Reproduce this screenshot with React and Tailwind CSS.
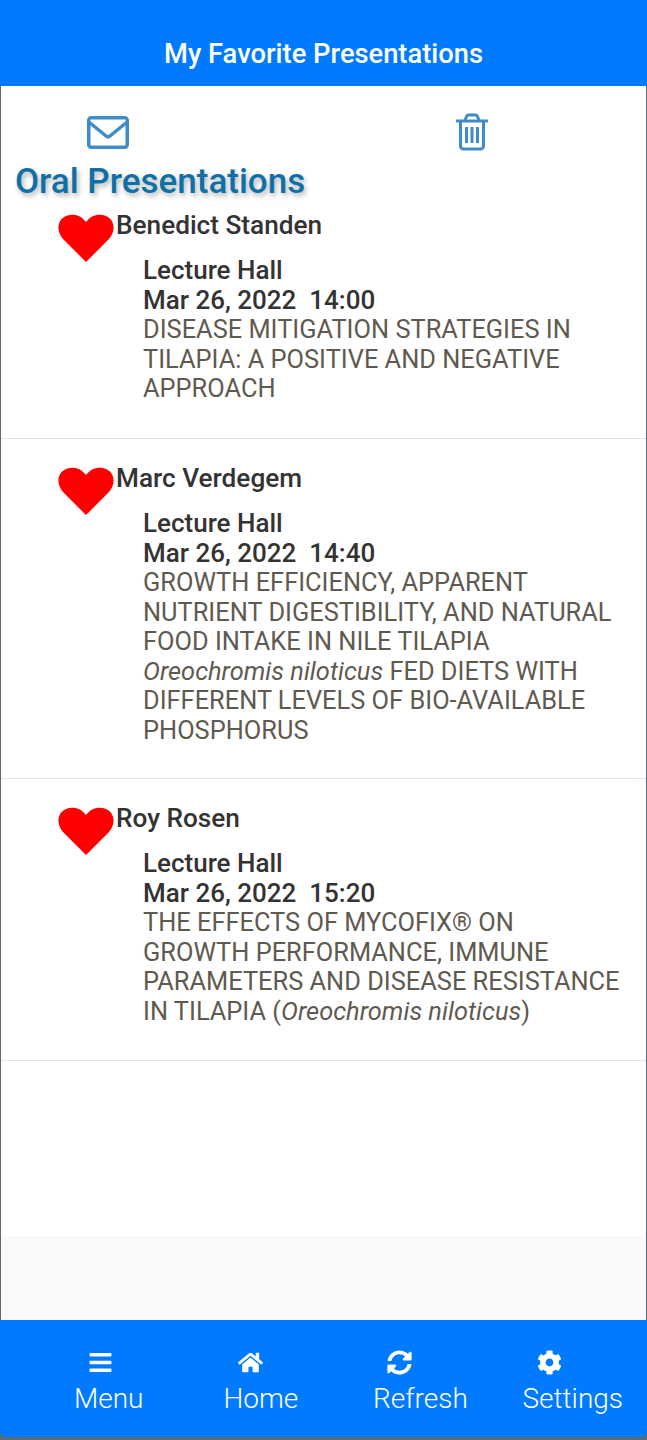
import React from 'react';
import { FaBars, FaHome, FaSyncAlt, FaCog } from 'react-icons/fa';

const talks = [
  {
    name: 'Benedict Standen',
    time: '14:00',
    title: <>DISEASE MITIGATION STRATEGIES IN TILAPIA: A POSITIVE AND NEGATIVE APPROACH</>,
    height: 'h-[253px]',
  },
  {
    name: 'Marc Verdegem',
    time: '14:40',
    title: (
      <>
        GROWTH EFFICIENCY, APPARENT NUTRIENT DIGESTIBILITY, AND NATURAL FOOD INTAKE IN NILE TILAPIA{' '}
        <i>Oreochromis niloticus</i> FED DIETS WITH DIFFERENT LEVELS OF BIO-AVAILABLE PHOSPHORUS
      </>
    ),
    height: 'h-[340px]',
  },
  {
    name: 'Roy Rosen',
    time: '15:20',
    title: (
      <>
        THE EFFECTS OF MYCOFIX® ON GROWTH PERFORMANCE, IMMUNE PARAMETERS AND DISEASE RESISTANCE IN TILAPIA (
        <i>Oreochromis niloticus</i>)
      </>
    ),
    height: 'h-[282px]',
  },
];

const tabs = [
  { label: 'Menu', icon: FaBars },
  { label: 'Home', icon: FaHome },
  { label: 'Refresh', icon: FaSyncAlt },
  { label: 'Settings', icon: FaCog },
];

// thin outline icons, the package ones are too heavy
const MailIcon = () => (
  <svg viewBox="0 0 42 33" className="w-[42px] h-[33px]" fill="none" stroke="currentColor" strokeWidth="3.5">
    <rect x="1.75" y="1.75" width="38.5" height="29.5" rx="2.5" />
    <path d="M2.5 6.5l16.5 13.5a3 3 0 0 0 4 0L39.5 6.5" />
  </svg>
);

const TrashIcon = () => (
  <svg viewBox="0 0 32 38" className="ml-[327px] w-[32px] h-[38px] -mt-[3px]" fill="none" stroke="currentColor" strokeWidth="3">
    <path d="M1 8h30" strokeLinecap="round" />
    <path d="M9 7l1.5-3.5a2 2 0 0 1 2-1.5h7a2 2 0 0 1 2 1.5L23 7" />
    <path d="M4.5 8v25a3 3 0 0 0 3 3h17a3 3 0 0 0 3-3V8" />
    <path d="M10.5 14v16M16 14v16M21.5 14v16" />
  </svg>
);

const HeartIcon = () => (
  <svg viewBox="0 0 56 48" className="mt-[12px] w-[56px] h-[48px] shrink-0" fill="#ff0000">
    <path d="M28 48L5 25C-2 17-1 6 8 2c7-3 15-1 20 6 5-7 13-9 20-6 9 4 10 15 3 23z" />
  </svg>
);

const TalkRow = ({ talk }) => (
  <div className={`${talk.height} border-b border-[#e4e4e4] pl-[57px] pr-[25px] pt-[16px]`}>
    <div className="flex items-start">
      <HeartIcon />
      <div className="text-[26.2px] leading-[30px] font-medium text-[#333333] mt-[8px] ml-[2px]">{talk.name}</div>
    </div>
    <div className="pl-[85px] -mt-[6px] leading-[29.5px]">
      <div className="text-[26px] font-medium text-[#333333]">Lecture Hall</div>
      <div className="text-[26px] font-medium text-[#333333] whitespace-pre">{`Mar 26, 2022  ${talk.time}`}</div>
      <div className="text-[25.4px] text-[#5f5a50]">{talk.title}</div>
    </div>
  </div>
);

const App = () => {
  return (
    <div className="w-[647px] h-[1440px] bg-[#5a6b78] overflow-hidden font-['Roboto',sans-serif] flex flex-col">
      <header className="h-[86px] bg-[#007aff] text-white text-[27.3px] font-medium flex items-center justify-center pt-[22px] shrink-0">
        My Favorite Presentations
      </header>

      <main className="flex-1 mx-[1px] bg-white flex flex-col min-h-0">
        <div className="h-[100px] shrink-0 pt-[30px] pl-[86px]">
          <div className="flex text-[#3f8ccb] h-[33px]">
            <MailIcon />
            <TrashIcon />
          </div>
          <h2 className="-ml-[72px] mt-[13px] text-[35px] leading-[40px] font-medium text-[#0f70a8] [text-shadow:2px_3px_5px_rgba(0,0,0,0.3)]">
            Oral Presentations
          </h2>
        </div>

        <div className="h-[1050px] shrink-0">
          {talks.map((talk) => (
            <TalkRow key={talk.name} talk={talk} />
          ))}
        </div>

        <div className="flex-1 bg-[#f9f9f9]" />
      </main>

      <footer className="h-[117px] mb-[3px] bg-[#007aff] rounded-b-md text-white flex pl-[74px] shrink-0">
        {tabs.map((tab) => (
          <div key={tab.label} className="w-[149.5px] shrink-0 flex flex-col pt-[30px]">
            <tab.icon className="ml-[14px] w-[25px] h-[25px]" />
            <span className="text-[28px] leading-[32px] mt-[8px] font-light">{tab.label}</span>
          </div>
        ))}
      </footer>
    </div>
  );
};

export default App;
